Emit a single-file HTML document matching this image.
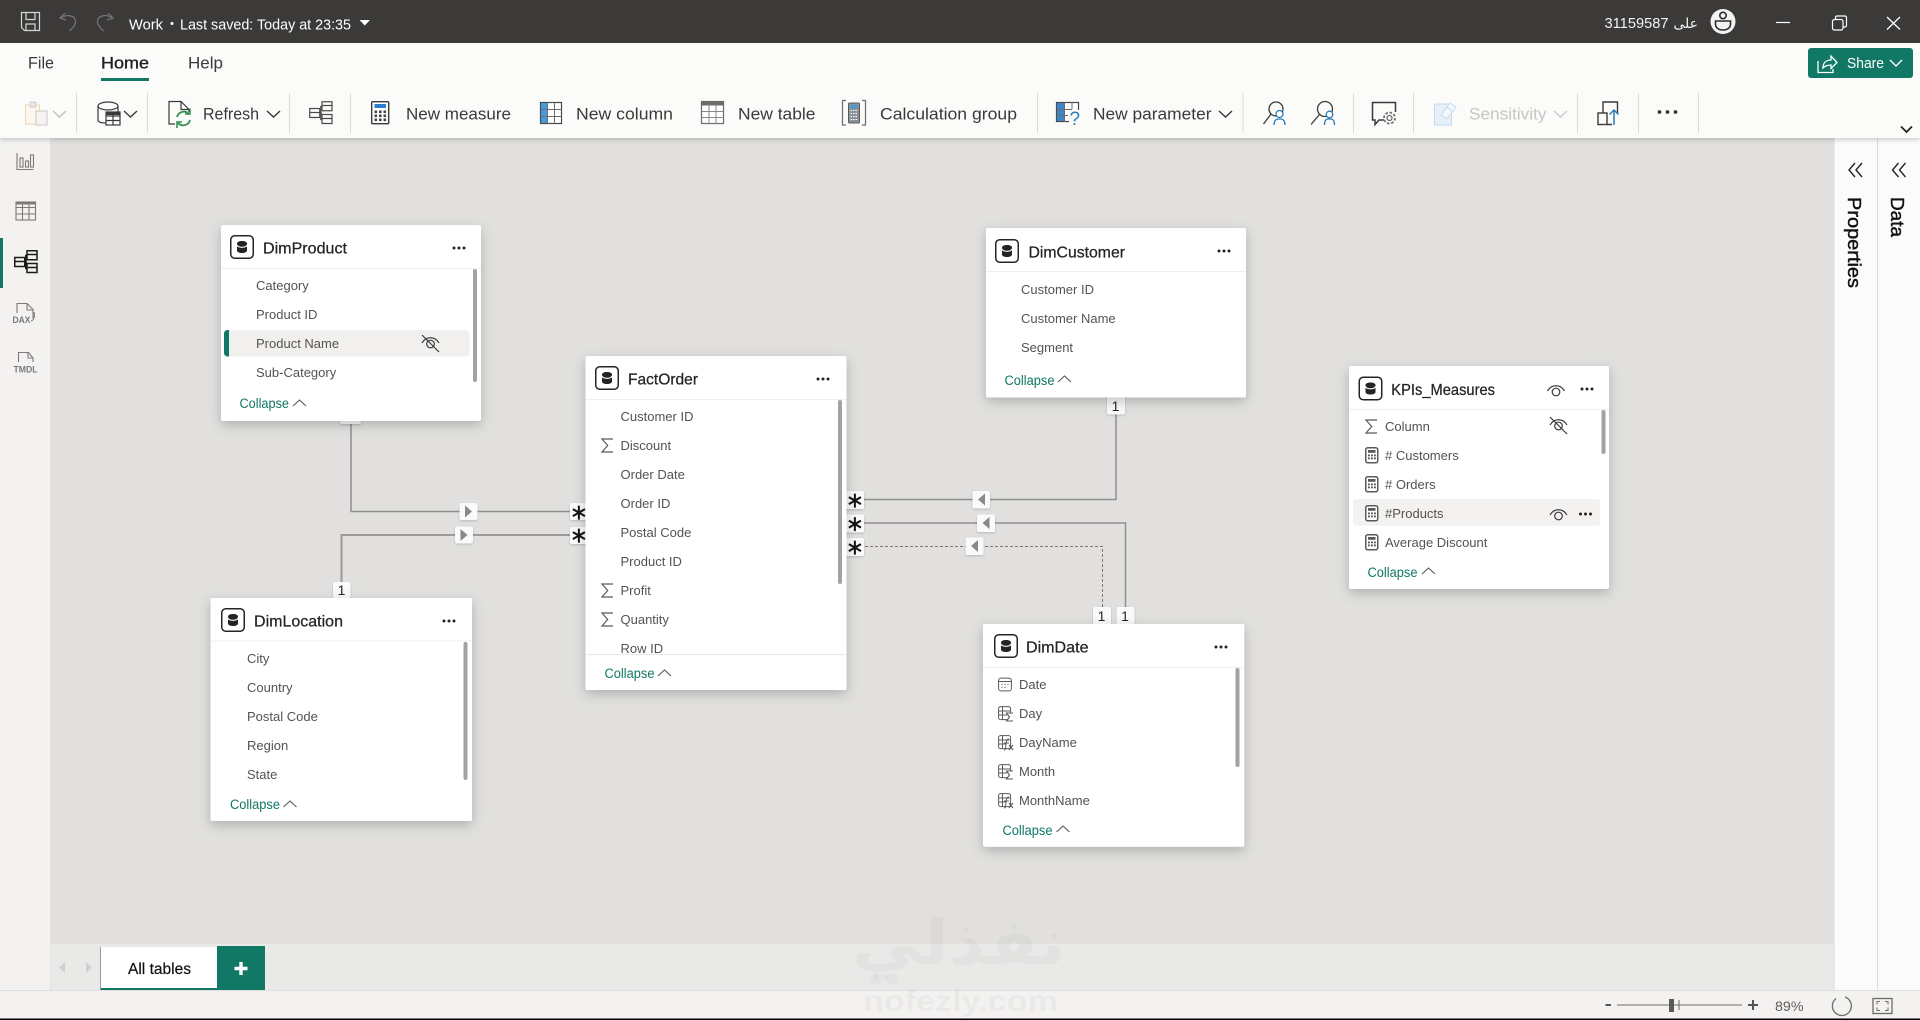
<!DOCTYPE html>
<html lang="en"><head><meta charset="utf-8"><title>Work - Power BI Model View</title>
<style>
html,body{margin:0;padding:0;background:#000;width:1920px;height:1020px;overflow:hidden}
svg{display:block}
text{font-family:"Liberation Sans","Noto Sans CJK SC",sans-serif;white-space:pre}
.r{font-size:13px;fill:#55534f}
.t{font-size:16px;fill:#252423;stroke:#252423;stroke-width:.25}
.c{font-size:13.5px;fill:#117865}
.m{font-size:16.5px;fill:#3b3a39}
.b{font-size:15px;fill:#fff}
.s{font-size:14px;fill:#252423;text-anchor:middle}
.st{font-family:"DejaVu Sans",sans-serif;font-size:22px;fill:#111;text-anchor:middle;stroke:#111;stroke-width:.2}
</style></head><body>
<svg xmlns="http://www.w3.org/2000/svg" width="1920" height="1020" viewBox="0 0 1920 1020">
<defs>
<filter id="sh" x="-20%" y="-20%" width="140%" height="150%"><feDropShadow dx="0" dy="4" stdDeviation="6" flood-color="#000" flood-opacity=".22"/></filter>
<filter id="ch" x="-30%" y="-30%" width="160%" height="160%"><feDropShadow dx="0" dy="1" stdDeviation="1" flood-color="#000" flood-opacity=".18"/></filter>
<filter id="rb" x="-1%" y="-5%" width="102%" height="115%"><feDropShadow dx="0" dy="2" stdDeviation="2.5" flood-color="#000" flood-opacity=".18"/></filter>
<g id="ti"><rect x=".75" y=".75" width="22.5" height="22.5" rx="4" fill="#fff" stroke="#252423" stroke-width="1.5"/><path d="M7 8.5C7 7 9.2 6 12 6s5 1 5 2.5v7c0 1.5-2.2 2.5-5 2.500s-5-1-5-2.500z" fill="#252423"/><path d="M7 9.8c0 1.500 2.200 2.500 5 2.500s5-1 5-2.500" stroke="#fff" stroke-width="1.200" fill="none"/></g>
<g id="d3" fill="#252423"><circle cx="-5" cy="0" r="1.500"/><circle cx="0" cy="0" r="1.500"/><circle cx="5" cy="0" r="1.500"/></g>
<path id="up" d="M0 6 6.500 0 13 6" fill="none" stroke="#5c5a58" stroke-width="1.100"/>
<path id="sig" d="M12.500 2H1.500L7.200 8.500 1.500 15H12.500" fill="none" stroke="#5c5a58" stroke-width="1.200"/>
<g id="eye" fill="none" stroke="#3b3a39" stroke-width="1.200"><path d="M0 7C4 0 13 0 17 7"/><circle cx="8.500" cy="8" r="3.800"/></g>
<g id="eyes" fill="none" stroke="#3b3a39" stroke-width="1.200"><path d="M1 9C5 2 14 2 18 9"/><circle cx="9.500" cy="10" r="3.800"/><path d="M1 1 18 18"/></g>
<g id="calc"><rect x=".75" y=".75" width="12" height="15" rx="2" fill="#fff" stroke="#5c5a58" stroke-width="1.500"/><rect x="3" y="3" width="7.500" height="2.800" fill="#5c5a58"/><g fill="#4f4d4b"><rect x="3" y="7.500" width="1.800" height="1.800"/><rect x="6" y="7.500" width="1.800" height="1.800"/><rect x="9" y="7.500" width="1.800" height="1.800"/><rect x="3" y="10.500" width="1.800" height="1.800"/><rect x="6" y="10.500" width="1.800" height="1.800"/><rect x="9" y="10.500" width="1.800" height="1.800"/></g></g>
<g id="cal" fill="none" stroke="#5c5a58"><rect x=".6" y=".6" width="12.800" height="12.800" rx="2.500"/><path d="M.6 4H13.400"/><path d="M3.500 7h1M6.500 7h1M9.500 7h1M3.500 10h1M6.500 10h1" stroke-width="1.200"/></g>
<g id="cs" fill="none" stroke="#5c5a58" stroke-width="1"><rect x=".6" y=".6" width="12" height="13" rx="2"/><path d="M4.500 .6V13.600M.6 5H12M.6 9H9"/><path d="M15 7H8.500L11.500 11 8.500 15H15" fill="#fff" stroke-width="1.100"/></g>
<g id="cf"><g fill="none" stroke="#5c5a58" stroke-width="1"><rect x=".6" y=".6" width="12" height="13" rx="2"/><path d="M4.500 .6V13.600M.6 5H12M.6 9H8"/></g><path d="M6 15c2 0 1.500-2 2-6s1-5 3-5M6 8h5" fill="none" stroke="#5c5a58"/><path d="M11 10l4 5M15 10l-4 5" stroke="#5c5a58" stroke-width="1.100"/></g>
<g id="mdl" fill="none"><rect x=".75" y="7.500" width="10" height="9"/><path d="M.75 11.500h10"/><rect x="13" y=".75" width="10" height="9"/><path d="M13 4.500h10"/><rect x="13" y="13.500" width="10" height="9"/><path d="M13 17.500h10M10.750 12h2.250M13 5.500h-1.200v13H13"/></g>
<path id="chev" d="M0 0 6.500 6 13 0" fill="none" stroke="#3b3a39" stroke-width="1.400"/>
</defs>

<!-- base -->
<rect width="1920" height="1020" fill="#000"/>
<rect y="0" width="1920" height="1018.500" fill="#f3f2f1"/>
<rect x="50" y="138" width="1784" height="806" fill="#e1e0de"/>
<rect x="50" y="944" width="1784" height="46" fill="#e9e9e8"/>
<rect x="0" y="990" width="1920" height="1" fill="#dfdede"/>
<rect x="50" y="138" width="1" height="852" fill="#e4e3e2"/>
<rect x="1834" y="138" width="86" height="852" fill="#fbfbfb"/>
<path d="M1834 138V990M1877.500 138V990" stroke="#dcdbda" stroke-width="1"/>

<!-- relationship lines -->
<g fill="none" stroke="#8f8e8d" stroke-width="1.500">
<path d="M351 421V511.500H585"/>
<path d="M341.500 590V535H585" stroke="#9b9a99" stroke-width="2"/>
<path d="M860 499.500H1116V400"/>
<path d="M860 523H1125.500V615"/>
<path d="M860 546.500H1102.500V615" stroke="#7a7978" stroke-width="1" stroke-dasharray="3 2"/>
</g>
<!-- chips -->
<g filter="url(#ch)" fill="#fafafa">
<rect x="340" y="417" width="21" height="7" rx="2"/>
<rect x="459.500" y="503" width="18" height="17" rx="2"/>
<rect x="455" y="526.500" width="18" height="17" rx="2"/>
<rect x="570" y="503" width="18" height="17" rx="2"/>
<rect x="570" y="527" width="18" height="17" rx="2"/>
<rect x="333" y="582" width="17.500" height="20" rx="2"/>
<rect x="844" y="491" width="20" height="18" rx="2"/>
<rect x="844" y="514.500" width="20" height="18" rx="2"/>
<rect x="844" y="538" width="20" height="18" rx="2"/>
<rect x="972.500" y="491" width="17.500" height="17.500" rx="2"/>
<rect x="977" y="514.500" width="18" height="17.500" rx="2"/>
<rect x="965.500" y="537.500" width="18" height="17.500" rx="2"/>
<rect x="1107" y="393" width="18" height="21.500" rx="2"/>
<rect x="1093" y="607" width="18" height="20" rx="2"/>
<rect x="1116.500" y="607" width="18" height="20" rx="2"/>
</g>
<g fill="#8a8988">
<path d="M465 505.500v12l7-6z"/><path d="M460.500 529v12l7-6z"/>
<path d="M985 493.500v12l-7-6z"/><path d="M989.500 517v12l-7-6z"/><path d="M978 540v12l-7-6z"/>
</g>
<g>
<text class="st" x="579" y="519.500">∗</text><text class="st" x="579" y="542.500">∗</text>
<text class="st" x="855" y="507.500">∗</text><text class="st" x="855" y="531">∗</text><text class="st" x="855" y="554.500">∗</text>
</g>
<g>
<text class="s" x="341.500" y="595">1</text>
<text class="s" x="1115.500" y="411">1</text>
<text class="s" x="1101.500" y="621">1</text>
<text class="s" x="1125" y="621">1</text>
</g>

<!-- DimProduct -->
<rect x="221" y="225" width="260" height="196" rx="2" fill="#fff" filter="url(#sh)"/>
<path d="M221 268.500H481" stroke="#f0efee"/>
<use href="#ti" x="230" y="235"/>
<text class="t" x="263" y="253.500" textLength="84" lengthAdjust="spacingAndGlyphs">DimProduct</text>
<use href="#d3" x="459" y="248"/>
<rect x="224.500" y="330" width="245" height="26.500" rx="3.500" fill="#f1f0ef"/>
<path d="M229 330h-1.500a3.500 3.500 0 0 0-3.500 3.500v19.500a3.500 3.500 0 0 0 3.500 3.500h1.500z" fill="#117865"/>
<text class="r" x="256" y="290">Category</text>
<text class="r" x="256" y="319">Product ID</text>
<text class="r" x="256" y="348">Product Name</text>
<text class="r" x="256" y="377">Sub-Category</text>
<use href="#eyes" x="421" y="334"/>
<rect x="473" y="269" width="4" height="113" rx="2" fill="#a3a2a1"/>
<text class="c" x="239.500" y="408" textLength="49.500" lengthAdjust="spacingAndGlyphs">Collapse</text>
<use href="#up" x="293" y="400"/>

<!-- FactOrder -->
<rect x="585.500" y="356" width="261" height="334" rx="2" fill="#fff" filter="url(#sh)"/>
<path d="M585.500 399.500H846.500" stroke="#f0efee"/>
<use href="#ti" x="595" y="366"/>
<text class="t" x="628" y="384.500" textLength="70" lengthAdjust="spacingAndGlyphs">FactOrder</text>
<use href="#d3" x="823" y="379"/>
<text class="r" x="620.500" y="421">Customer ID</text>
<use href="#sig" x="600.500" y="437"/><text class="r" x="620.500" y="450">Discount</text>
<text class="r" x="620.500" y="479">Order Date</text>
<text class="r" x="620.500" y="508">Order ID</text>
<text class="r" x="620.500" y="537">Postal Code</text>
<text class="r" x="620.500" y="566">Product ID</text>
<use href="#sig" x="600.500" y="582"/><text class="r" x="620.500" y="595">Profit</text>
<use href="#sig" x="600.500" y="611"/><text class="r" x="620.500" y="624">Quantity</text>
<text class="r" x="620.500" y="653">Row ID</text>
<rect x="586" y="654.500" width="260" height="35" fill="#fff"/>
<path d="M587 654.500H845" stroke="#e8e7e6"/>
<rect x="838" y="400" width="4" height="184" rx="2" fill="#a3a2a1"/>
<text class="c" x="604.500" y="678" textLength="50" lengthAdjust="spacingAndGlyphs">Collapse</text>
<use href="#up" x="658" y="670"/>

<!-- DimLocation -->
<rect x="210.500" y="598" width="261.500" height="223" rx="2" fill="#fff" filter="url(#sh)"/>
<path d="M210.500 641H472" stroke="#f0efee"/>
<use href="#ti" x="221" y="608"/>
<text class="t" x="254" y="626.500" textLength="89" lengthAdjust="spacingAndGlyphs">DimLocation</text>
<use href="#d3" x="449" y="621"/>
<text class="r" x="247" y="663">City</text>
<text class="r" x="247" y="692">Country</text>
<text class="r" x="247" y="721">Postal Code</text>
<text class="r" x="247" y="750">Region</text>
<text class="r" x="247" y="779">State</text>
<rect x="463.500" y="642" width="4" height="138" rx="2" fill="#a3a2a1"/>
<text class="c" x="230" y="809" textLength="50" lengthAdjust="spacingAndGlyphs">Collapse</text>
<use href="#up" x="283.500" y="801"/>

<!-- DimCustomer -->
<rect x="986" y="228" width="260" height="169.500" rx="2" fill="#fff" filter="url(#sh)"/>
<path d="M986 271.500H1246" stroke="#f0efee"/>
<use href="#ti" x="995" y="239"/>
<text class="t" x="1028.500" y="257.500" textLength="96.500" lengthAdjust="spacingAndGlyphs">DimCustomer</text>
<use href="#d3" x="1224" y="251"/>
<text class="r" x="1021" y="294">Customer ID</text>
<text class="r" x="1021" y="323">Customer Name</text>
<text class="r" x="1021" y="352">Segment</text>
<text class="c" x="1004.500" y="385" textLength="50" lengthAdjust="spacingAndGlyphs">Collapse</text>
<use href="#up" x="1058" y="376"/>

<!-- DimDate -->
<rect x="983" y="624" width="261.300" height="222.700" rx="2" fill="#fff" filter="url(#sh)"/>
<path d="M983 667.500H1244" stroke="#f0efee"/>
<use href="#ti" x="994" y="634"/>
<text class="t" x="1026" y="652.500" textLength="62.500" lengthAdjust="spacingAndGlyphs">DimDate</text>
<use href="#d3" x="1221" y="647"/>
<use href="#cal" x="998" y="677.500"/><text class="r" x="1019" y="689">Date</text>
<use href="#cs" x="998" y="706"/><text class="r" x="1019" y="718">Day</text>
<use href="#cf" x="998" y="735"/><text class="r" x="1019" y="747">DayName</text>
<use href="#cs" x="998" y="764"/><text class="r" x="1019" y="776">Month</text>
<use href="#cf" x="998" y="793"/><text class="r" x="1019" y="805">MonthName</text>
<rect x="1235.500" y="668" width="4" height="99" rx="2" fill="#a3a2a1"/>
<text class="c" x="1002.500" y="835" textLength="50" lengthAdjust="spacingAndGlyphs">Collapse</text>
<use href="#up" x="1056.500" y="826"/>

<!-- KPIs -->
<rect x="1349" y="366" width="260" height="223" rx="2" fill="#fff" filter="url(#sh)"/>
<path d="M1349 409.500H1609" stroke="#f0efee"/>
<use href="#ti" x="1358.500" y="376.500"/>
<text class="t" x="1391.300" y="395" textLength="103.700" lengthAdjust="spacingAndGlyphs">KPIs_Measures</text>
<use href="#eye" x="1547.500" y="384"/>
<use href="#d3" x="1587" y="389"/>
<rect x="1353" y="499" width="247" height="26.700" rx="3" fill="#f4f2f1"/>
<use href="#sig" x="1364.500" y="418"/><text class="r" x="1385" y="431">Column</text>
<use href="#eyes" x="1549" y="416"/>
<use href="#calc" x="1365" y="447"/><text class="r" x="1385" y="460"># Customers</text>
<use href="#calc" x="1365" y="476"/><text class="r" x="1385" y="489"># Orders</text>
<use href="#calc" x="1365" y="505"/><text class="r" x="1385" y="518">#Products</text>
<use href="#eye" x="1550" y="508"/>
<use href="#d3" x="1585.500" y="514"/>
<use href="#calc" x="1365" y="534"/><text class="r" x="1385" y="547">Average Discount</text>
<rect x="1601.500" y="410" width="4" height="44" rx="2" fill="#a3a2a1"/>
<text class="c" x="1367.500" y="577" textLength="50" lengthAdjust="spacingAndGlyphs">Collapse</text>
<use href="#up" x="1422" y="568"/>

<!-- tabs -->
<path d="M65 962v11l-6-5.500zM86 962v11l6-5.500z" fill="#cfcfcf"/>
<rect x="100" y="947" width="1" height="43" fill="#9a9a9a"/>
<rect x="101" y="947" width="116" height="43" fill="#fff"/>
<rect x="101" y="988" width="116" height="2" fill="#117865"/>
<rect x="217" y="946" width="48" height="44" fill="#117865"/>
<path d="M241 962v13M234.500 968.500h13" stroke="#fff" stroke-width="3.400"/>
<text x="128" y="974" textLength="63" lengthAdjust="spacingAndGlyphs" style="font-size:15.500px;fill:#111;stroke:#111;stroke-width:.2">All tables</text>

<!-- left nav -->
<g fill="none" stroke="#7d7b79" stroke-width="1.100">
<path d="M17 153V169.500H33.500"/><rect x="20" y="158" width="3" height="9"/><rect x="25.500" y="161" width="3" height="6"/><rect x="30.500" y="155" width="3" height="12"/>
<rect x="16" y="202" width="19.500" height="18"/><path d="M16 207.500H35.500M16 214H35.500M22.500 202V220M29 202V220" /><path d="M16 203.500H35.500" stroke-width="2"/>
<path d="M17 313V303.500H27L33 309.500V318"/><path d="M27 304V310H33"/><path d="M34 312c1 4 0 8-3 9"/>
<path d="M18.500 362V352.500H28.500L33 358V362"/><path d="M28 352.500V358H33"/>
</g>
<text x="12.500" y="323" textLength="18" lengthAdjust="spacingAndGlyphs" style="font-size:9px;fill:#7a7978;font-weight:bold">DAX</text>
<text x="13.500" y="372.500" textLength="24" lengthAdjust="spacingAndGlyphs" style="font-size:9px;fill:#7a7978;font-weight:bold">TMDL</text>
<rect x="0" y="238" width="3" height="50" fill="#117865"/>
<use href="#mdl" x="14" y="250" stroke="#1b1a19" stroke-width="1.500"/>

<!-- ribbon -->
<rect x="0" y="43" width="1920" height="95" fill="#fbfbfa" filter="url(#rb)"/>
<path d="M76.500 93V133M147.500 93V133M289.500 93V133M350.500 93V133M1037.500 93V133M1243 93V133M1353.500 93V133M1413.500 93V133M1577.500 93V133M1638.500 93V133M1698.500 93V133" stroke="#dcdbda"/>
<text class="m" x="28" y="68.500" textLength="26" lengthAdjust="spacingAndGlyphs">File</text>
<text class="m" x="101" y="68.500" textLength="48" lengthAdjust="spacingAndGlyphs" style="fill:#201f1e;stroke:#201f1e;stroke-width:.35">Home</text>
<text class="m" x="188" y="68.500" textLength="35" lengthAdjust="spacingAndGlyphs">Help</text>
<rect x="101" y="78" width="48" height="3" fill="#117865"/>

<!-- paste -->
<rect x="25.500" y="105" width="14" height="19" fill="#fdf7ef" stroke="#f1d6b4"/><rect x="30" y="102" width="6" height="5" fill="#e5e5e5" stroke="#d0d0d0"/><rect x="36" y="111" width="11" height="14" fill="#f4f4f4" stroke="#c8c6c4"/>
<use href="#chev" x="53" y="111" style="opacity:.3"/>
<!-- data -->
<g fill="none" stroke="#3b3a39" stroke-width="1.200"><ellipse cx="108" cy="106" rx="10" ry="4"/><path d="M98 106V120c0 2 3 3 8 3M118 106V112"/><rect x="106" y="112" width="14" height="13" fill="#fff"/><path d="M106 116H120M106 120.500H120M113 112V125"/></g>
<path d="M106 112h14v3h-14z" fill="#3b3a39"/>
<use href="#chev" x="124" y="111"/>
<!-- refresh -->
<g fill="none"><path d="M175 124H169V101.500H181L189 109.500V112M181 101.500V109.500H189" stroke="#3b3a39" stroke-width="1.200"/><path d="M177 117a7 7 0 0 1 12-3M190 120a7 7 0 0 1-12 3" stroke="#2f8c4a" stroke-width="1.700"/><path d="M190 109.500V115H185M177 129V123H182" stroke="#2f8c4a" stroke-width="1.500" transform="translate(0,-1)"/></g>
<text class="m" x="203" y="119.500" textLength="56" lengthAdjust="spacingAndGlyphs">Refresh</text>
<use href="#chev" x="267" y="111"/>
<use href="#mdl" x="309" y="101" stroke="#4a4947" stroke-width="1.200"/>
<!-- calculator -->
<rect x="371.700" y="101.700" width="17" height="22" rx="1" fill="#fff" stroke="#3b3a39" stroke-width="1.400"/><rect x="374.500" y="104" width="11.500" height="4" fill="#2b7cd3"/><g fill="#444"><rect x="374.500" y="110.500" width="2.600" height="2.600"/><rect x="379" y="110.500" width="2.600" height="2.600"/><rect x="383.500" y="110.500" width="2.600" height="2.600"/><rect x="374.500" y="114.500" width="2.600" height="2.600"/><rect x="379" y="114.500" width="2.600" height="2.600"/><rect x="383.500" y="114.500" width="2.600" height="2.600"/><rect x="374.500" y="118.500" width="2.600" height="2.600"/><rect x="379" y="118.500" width="2.600" height="2.600"/><rect x="383.500" y="118.500" width="2.600" height="2.600"/></g>
<text class="m" x="406" y="119.500" textLength="105" lengthAdjust="spacingAndGlyphs">New measure</text>
<!-- new column -->
<rect x="540.500" y="102.500" width="21" height="21" fill="#fff" stroke="#4a4947" stroke-width="1.200"/><rect x="541" y="103" width="7" height="20" fill="#3e9ce0"/><path d="M540.500 109.500H561.500M540.500 116.500H561.500M547.500 102.500V123.500M554.500 102.500V123.500" stroke="#6d6c6a"/>
<text class="m" x="576" y="119.500" textLength="97" lengthAdjust="spacingAndGlyphs">New column</text>
<!-- new table -->
<rect x="701.500" y="101.500" width="22" height="22" fill="#fff" stroke="#6d6c6a" stroke-width="1.200"/><rect x="701.500" y="101.500" width="22" height="4" fill="#6d6c6a"/><path d="M701.500 111.500H723.500M701.500 117.500H723.500M709 105V123.500M716 105V123.500" stroke="#8a8886"/>
<text class="m" x="738" y="119.500" textLength="77.500" lengthAdjust="spacingAndGlyphs">New table</text>
<!-- calc group -->
<path d="M846 100.500H842.500V125H846M862 100.500H865.500V125H862" fill="none" stroke="#6d6c6a" stroke-width="1.200"/><rect x="848.500" y="103" width="11" height="20" rx="1" fill="#8a9299" stroke="#5c5c5c"/><rect x="850.500" y="105" width="7" height="3" fill="#3e9ce0"/><path d="M850.500 110.500h7M850.500 113.500h7M850.500 116.500h7M850.500 119.500h7" stroke="#fff" stroke-dasharray="1.500 1"/>
<text class="m" x="880" y="119.500" textLength="137" lengthAdjust="spacingAndGlyphs">Calculation group</text>
<!-- param -->
<rect x="1056.500" y="102.500" width="22" height="19" fill="#fff" stroke="#4a4947" stroke-width="1.200"/><rect x="1057" y="103" width="7.500" height="18" fill="#3e86cc"/><path d="M1056.500 109.500H1072M1056.500 115.500H1068M1064.500 102.500V121.500M1072 102.500V109" stroke="#6d6c6a"/>
<rect x="1069" y="110" width="11" height="17" fill="#fbfbfa"/>
<text x="1069.500" y="125" style="font-size:19px;fill:#2b7cb5">?</text>
<text class="m" x="1093" y="119.500" textLength="118.500" lengthAdjust="spacingAndGlyphs">New parameter</text>
<use href="#chev" x="1219" y="111"/>
<!-- quick icons -->
<g fill="none" stroke-width="1.300"><circle cx="1276" cy="109" r="7" stroke="#3b3a39"/><path d="M1271 114 1263.500 124" stroke="#3b3a39"/><circle cx="1279.500" cy="114" r="3.500" stroke="#2b7cb5" fill="#fff"/><path d="M1274 125c0-4 2-6 4-6h3c2 0 4 2 4 6" stroke="#2b7cb5"/>
<circle cx="1325" cy="109" r="7.500" stroke="#3b3a39"/><path d="M1319.500 114.500 1311 124.500" stroke="#3b3a39"/><circle cx="1329.500" cy="114.500" r="3.300" stroke="#2b7cb5" fill="#fff"/><path d="M1324.500 125c0-4 1.500-6 3.500-6h3c2 0 3.500 2 3.500 6" stroke="#2b7cb5"/>
<path d="M1384 120H1379L1375 124.500V120H1372.500V102.500H1395.500V112" stroke="#3b3a39" stroke-width="1.500"/><circle cx="1389.500" cy="118" r="2.500" stroke="#6d6c6a"/><circle cx="1389.500" cy="118" r="5.500" stroke="#6d6c6a" stroke-width="1.800" stroke-dasharray="2.500 1.800"/></g>
<!-- sensitivity -->
<rect x="1434.500" y="104" width="17" height="21" fill="#e6f0f8" stroke="#c4dcef"/><path d="M1441 115 1450 103l6 4-9 12z" fill="#f4f8fb" stroke="#c4dcef"/><path d="M1447 107l5 4" stroke="#c4dcef"/>
<text class="m" x="1469" y="119.500" textLength="77.500" lengthAdjust="spacingAndGlyphs" style="fill:#c8c6c4">Sensitivity</text>
<use href="#chev" x="1554" y="111" style="opacity:.25"/>
<!-- publish -->
<g fill="none" stroke="#3b3a39" stroke-width="1.400"><rect x="1598" y="113" width="9" height="11.500"/><path d="M1603 113V102H1617.500V113M1607 124.500H1612"/></g><path d="M1614 125V110M1609.500 114.500 1614 110 1618.500 114.500" fill="none" stroke="#2b7cb5" stroke-width="1.500"/>
<g fill="#3b3a39"><circle cx="1659.500" cy="112" r="1.900"/><circle cx="1667.500" cy="112" r="1.900"/><circle cx="1675.500" cy="112" r="1.900"/></g>
<path d="M1901 126.500 1906.500 132 1912 126.500" fill="none" stroke="#252423" stroke-width="1.800"/>
<!-- share -->
<rect x="1808" y="48" width="105" height="30" rx="3" fill="#117865"/>
<g fill="none" stroke="#fff" stroke-width="1.300"><path d="M1818 61V72.500H1833V69"/><path d="M1823 68c0-6 4-8 8-8V56l6 6.500-6 6V65c-3 0-6 1-8 3z"/></g>
<text class="b" x="1847" y="68" textLength="37" lengthAdjust="spacingAndGlyphs">Share</text>
<path d="M1890 60 1896 66 1902 60" fill="none" stroke="#fff" stroke-width="1.400"/>

<!-- title bar -->
<rect x="0" y="0" width="1920" height="43" fill="#3b3a39"/>
<g fill="none" stroke="#d8d7d6" stroke-width="1.200"><path d="M21.500 12.500H39.500V30.500H24.500L21.500 27.500z"/><path d="M26 12.500V19.500H35V12.500M26 30.500V24H35V30.500"/></g>
<g fill="none" stroke="#777675" stroke-width="1.200"><path d="M65 13 60 18 66 20"/><path d="M60.500 18C66 14 75 15 75.500 21c.3 4-3 7-6 10"/><path d="M108 13 113 18 107 20"/><path d="M112.500 18C107 14 98 15 97.500 21c-.3 4 3 7 6 10"/></g>
<text x="129" y="29.500" textLength="34" lengthAdjust="spacingAndGlyphs" style="font-size:14.500px;fill:#fff">Work</text>
<circle cx="172" cy="23.500" r="1.500" fill="#fff"/>
<text x="180" y="29.500" textLength="171" lengthAdjust="spacingAndGlyphs" style="font-size:14.500px;fill:#fff">Last saved: Today at 23:35</text>
<path d="M359.500 20H370L364.800 25.500z" fill="#fff"/>
<text x="1604.500" y="28" textLength="64" lengthAdjust="spacingAndGlyphs" style="font-size:14.500px;fill:#f3f2f1">31159587</text>
<text x="1698" y="28" direction="rtl" text-anchor="start" style="font-family:'DejaVu Sans',sans-serif;font-size:14px;fill:#f3f2f1">على</text>
<circle cx="1723" cy="21.500" r="12.500" fill="#f3f2f1"/>
<circle cx="1723" cy="15.500" r="3.200" fill="none" stroke="#2d2c2b" stroke-width="1.600"/><path d="M1715.500 21H1730.500V24c0 4-3.500 6-7.500 6s-7.500-2-7.500-6z" fill="none" stroke="#2d2c2b" stroke-width="1.600"/>
<path d="M1776 22.500H1790" stroke="#fff" stroke-width="1.200"/>
<g fill="none" stroke="#fff" stroke-width="1.200"><rect x="1832.500" y="19.500" width="10.500" height="10.500" rx="2"/><path d="M1835.500 19V17.500c0-.8.7-1.500 1.500-1.500h8c.8 0 1.500.7 1.500 1.500v8c0 .8-.7 1.500-1.500 1.500h-1.500"/></g>
<path d="M1887 17 1900 29.500M1900 17 1887 29.500" stroke="#fff" stroke-width="1.300"/>

<!-- side panes -->
<path d="M1855 163 1849 170 1855 177M1862 163 1856 170 1862 177M1898.500 163 1892.500 170 1898.500 177M1905.500 163 1899.500 170 1905.500 177" fill="none" stroke="#252423" stroke-width="1.400"/>
<text transform="translate(1848,197) rotate(90)" textLength="91" lengthAdjust="spacingAndGlyphs" style="font-size:18px;fill:#111;stroke:#111;stroke-width:.45">Properties</text>
<text transform="translate(1891,197) rotate(90)" textLength="40" lengthAdjust="spacingAndGlyphs" style="font-size:18px;fill:#111;stroke:#111;stroke-width:.45">Data</text>

<!-- status bar -->
<path d="M1605.500 1005H1611" stroke="#555" stroke-width="2"/>
<path d="M1617 1005H1742" stroke="#6d6c6a"/>
<rect x="1669" y="999" width="5" height="13" fill="#5c5a58"/>
<path d="M1679 1000V1010" stroke="#6d6c6a"/>
<path d="M1748 1005H1758M1753 1000V1010" stroke="#555" stroke-width="2"/>
<text x="1775" y="1011" textLength="28.500" lengthAdjust="spacingAndGlyphs" style="font-size:14px;fill:#605e5c">89%</text>
<path d="M1836 998.500A9.500 9.500 0 1 0 1845 997" fill="none" stroke="#6d6c6a" stroke-width="1.300"/>
<rect x="1873" y="998.500" width="19" height="15" fill="none" stroke="#6d6c6a" stroke-width="1.300"/>
<path d="M1877 1004.500V1001.500H1880M1885 1001.500H1888V1004.500M1888 1007.500V1010.500H1885M1880 1010.500H1877V1007.500" fill="none" stroke="#6d6c6a"/>

<!-- watermark -->
<g style="pointer-events:none">
<text x="852" y="964" textLength="214" lengthAdjust="spacingAndGlyphs" style="font-family:'DejaVu Sans',sans-serif;font-size:62px;font-weight:bold;fill:#000;opacity:.022">نفذلي</text>
<circle cx="876" cy="979" r="6" fill="#000" opacity=".025"/><circle cx="892" cy="979" r="6" fill="#000" opacity=".025"/>
<text x="863" y="1011" textLength="195" lengthAdjust="spacingAndGlyphs" style="font-size:30px;font-weight:bold;fill:#000;opacity:.03">nofezly.com</text>
</g>
</svg>
</body></html>
